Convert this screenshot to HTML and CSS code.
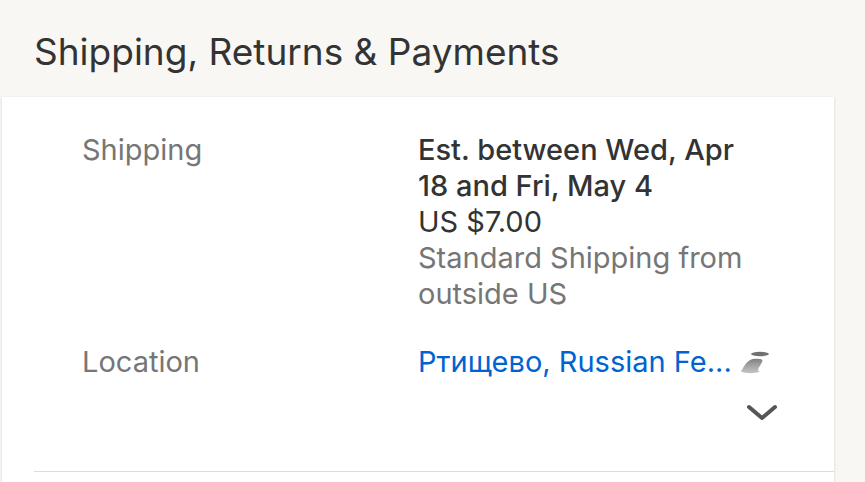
FILE: index.html
```html
<!DOCTYPE html>
<html lang="en">
<head>
<meta charset="utf-8">
<meta name="viewport" content="width=device-width, initial-scale=1">
<title>Shipping, Returns &amp; Payments</title>
<link rel="stylesheet" href="styles.css">
</head>
<body>
<main>
  <h1 class="title">Shipping, Returns &amp; Payments</h1>
  <section class="card">
    <dl class="details">
      <dt>Shipping</dt>
      <dd>
        <p class="estimate">Est. between Wed, Apr 18 and Fri, May 4</p>
        <p>US $7.00</p>
        <p class="muted">Standard Shipping from outside US</p>
      </dd>
      <dt>Location</dt>
      <dd class="location">
        <a href="#location">Ртищево, Russian Fe...</a>
        <svg class="info" viewBox="0 0 32 24" aria-hidden="true">
          <defs>
            <linearGradient id="stem" x1="0" y1="0" x2="0" y2="1">
              <stop offset="0" stop-color="#808080"/>
              <stop offset="0.5" stop-color="#a4a4a4"/>
              <stop offset="1" stop-color="#c4c4c4"/>
            </linearGradient>
            <filter id="soft" x="-20%" y="-20%" width="140%" height="140%"><feGaussianBlur stdDeviation="0.6"/></filter>
          </defs>
          <g filter="url(#soft)">
            <ellipse cx="20" cy="4" rx="9" ry="2.200" fill="#707070"/>
            <path d="M10 10Q12 8.700 16 8.700Q21 8.500 22.500 10Q22.500 12 20.500 15Q18 18 18 20.500L19.500 22Q14 23.500 8 23Q3 22.800 0.500 21Q2.500 20 3.500 17Q6 12.500 10 10Z" fill="url(#stem)"/>
          </g>
        </svg>
      </dd>
    </dl>
    <button class="expand" type="button" aria-label="Show more">
      <svg viewBox="0 0 32 18" aria-hidden="true"><path d="M3 3L16 14L29 3"/></svg>
    </button>
    <hr>
  </section>
</main>
</body>
</html>
```
FILE: styles.css
```css
* {
  box-sizing: border-box;
}

body {
  margin: 0;
  min-height: 100vh;
  background: #f8f7f3;
  color: #333;
  font: 29px/36px Inter, "Noto Sans", sans-serif;
  overflow: hidden;
}

main {
  display: flex;
  flex-direction: column;
  min-height: 100vh;
}

.title {
  margin: 0;
  padding: 28px 34px 21px;
  font-size: 37px;
  font-weight: 400;
  line-height: 48px;
}

.card {
  flex: 1;
  margin: 0 31px 0 2px;
  padding-top: 35px;
  background: #fff;
  box-shadow: 0 1px 3px rgba(0, 0, 0, 0.14);
}

.details {
  display: grid;
  grid-template-columns: 336px 1fr;
  row-gap: 32px;
  margin: 0;
  padding: 0 56px 0 80px;
}

dt,
.muted {
  color: #767676;
}

dd,
p {
  margin: 0;
}

.estimate {
  padding-right: 24px;
  font-weight: 500;
}

.location {
  display: flex;
  align-items: center;
  gap: 8px;
  white-space: nowrap;
}

a {
  color: #0063d1;
  text-decoration: none;
}

.info {
  flex: none;
  width: 32px;
  height: 24px;
}

.expand {
  display: block;
  margin: 20px 56px 0 auto;
  padding: 4px 0;
  border: 0;
  background: none;
}

.expand svg {
  display: block;
  width: 32px;
  height: 18px;
  fill: none;
  stroke: #555;
  stroke-width: 4;
  stroke-linecap: round;
  stroke-linejoin: round;
}

hr {
  height: 1px;
  margin: 45px 0 0 32px;
  border: 0;
  background: #dcdcdc;
}
```
